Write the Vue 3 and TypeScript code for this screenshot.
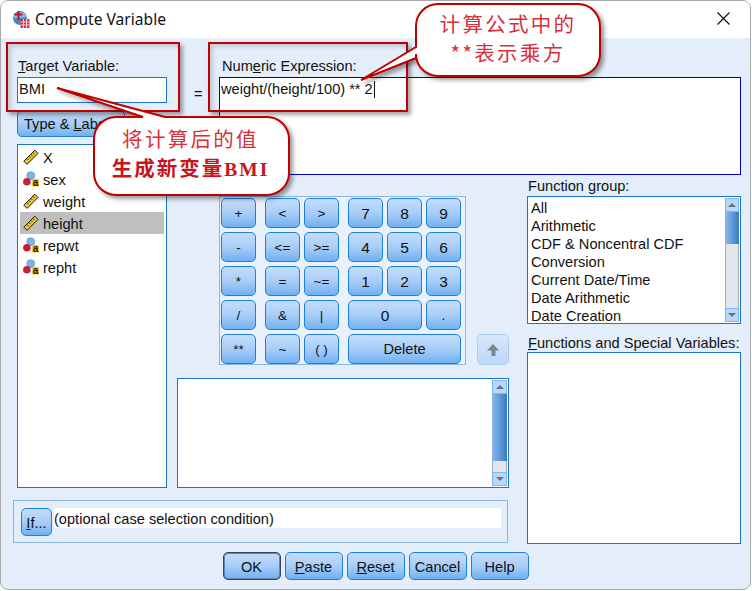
<script setup lang="ts">
interface Variable { name: string; kind: 'scale' | 'nominal'; selected?: boolean }
interface Key { label: string; col: string; row: number }

const variables: Variable[] = [
  { name: 'X', kind: 'scale' },
  { name: 'sex', kind: 'nominal' },
  { name: 'weight', kind: 'scale' },
  { name: 'height', kind: 'scale', selected: true },
  { name: 'repwt', kind: 'nominal' },
  { name: 'repht', kind: 'nominal' },
]

const keys: Key[] = [
  { label: '+', col: '1', row: 1 }, { label: '<', col: '3', row: 1 }, { label: '>', col: '5', row: 1 },
  { label: '7', col: '7', row: 1 }, { label: '8', col: '9', row: 1 }, { label: '9', col: '11', row: 1 },
  { label: '-', col: '1', row: 2 }, { label: '<=', col: '3', row: 2 }, { label: '>=', col: '5', row: 2 },
  { label: '4', col: '7', row: 2 }, { label: '5', col: '9', row: 2 }, { label: '6', col: '11', row: 2 },
  { label: '*', col: '1', row: 3 }, { label: '=', col: '3', row: 3 }, { label: '~=', col: '5', row: 3 },
  { label: '1', col: '7', row: 3 }, { label: '2', col: '9', row: 3 }, { label: '3', col: '11', row: 3 },
  { label: '/', col: '1', row: 4 }, { label: '&', col: '3', row: 4 }, { label: '|', col: '5', row: 4 },
  { label: '0', col: '7 / span 3', row: 4 }, { label: '.', col: '11', row: 4 },
  { label: '**', col: '1', row: 5 }, { label: '~', col: '3', row: 5 }, { label: '( )', col: '5', row: 5 },
  { label: 'Delete', col: '7 / span 5', row: 5 },
]

const groups: string[] = ['All', 'Arithmetic', 'CDF & Noncentral CDF', 'Conversion', 'Current Date/Time', 'Date Arithmetic', 'Date Creation']
</script>

<template>
  <div class="dialog">
    <header class="title">
      <svg class="title-icon" width="18" height="18" viewBox="0 0 18 18">
        <circle cx="8" cy="8" r="7" fill="#4f87b8" />
        <path d="M1.5 8A7 7 0 0 1 15 7L8 8Z" fill="#8fb8dc" />
        <path d="M6.5 1v9M2.5 4.5h8" stroke="#c8102e" stroke-width="2" />
        <rect x="8.5" y="9" width="9" height="9" fill="#c8354a" />
        <path d="M11.5 9v9M14.5 9v9M8.5 12h9M8.5 15h9" stroke="#f3d0d5" stroke-width="1" />
      </svg>
      <span class="title-text">Compute Variable</span>
      <svg class="close" width="13" height="13" viewBox="0 0 13 13">
        <path d="M.5.5l12 12M12.5.5l-12 12" stroke="#111" stroke-width="1.2" />
      </svg>
    </header>

    <main class="body">
      <section class="left">
        <label class="label target-label"><u>T</u>arget Variable:</label>
        <div class="target-input">BMI</div>
        <button class="btn type-btn">Type &amp; <u>L</u>abel...</button>
        <ul class="var-list">
          <li v-for="v in variables" :key="v.name" class="var" :class="{ selected: v.selected }">
            <svg v-if="v.kind === 'scale'" class="var-icon" width="16" height="16" viewBox="0 0 16 16">
              <path d="M.8 12.2 11.8 1.2l3.2 3.2L4 15.400Z" fill="#f4c531" stroke="#1a1a1a" stroke-width="1" />
              <path d="M4 9.500l1.600 1.600M6 7.500l1.600 1.600M8 5.500l1.600 1.600M10 3.500l1.600 1.600" stroke="#1a1a1a" stroke-width="1" />
            </svg>
            <svg v-else class="var-icon" width="16" height="16" viewBox="0 0 16 16">
              <circle cx="7.700" cy="4.700" r="4" fill="#7fb0e6" stroke="#5b8cc4" stroke-width=".6" />
              <circle cx="3.900" cy="10.700" r="3.800" fill="#c8202f" />
              <rect x="9" y="8" width="7" height="7.500" fill="#f5cb2a" />
              <text x="12.500" y="15" class="a-glyph">a</text>
            </svg>
            <span class="var-name">{{ v.name }}</span>
          </li>
        </ul>
      </section>

      <section class="expr-row">
        <div class="eq">=</div>
        <div class="expr-col">
          <label class="label expr-label">Num<u>e</u>ric Expression:</label>
          <div class="expr-box">weight/(height/100) ** 2<span class="caret"></span></div>
        </div>
      </section>

      <section class="middle">
        <div class="pad-row">
          <div class="keypad">
            <button
              v-for="k in keys"
              :key="k.label"
              class="btn key"
              :class="{ big: /^[0-9]$/.test(k.label), wide: k.label === 'Delete' }"
              :style="{ gridColumn: k.col, gridRow: k.row }"
            >{{ k.label }}</button>
          </div>
          <button class="arrow-btn" aria-label="Move up">
            <svg width="14" height="14" viewBox="0 0 14 14"><path d="M7 1 13 7.500H9.500V13H5.500V7.500H1Z" fill="#7d8690" /></svg>
          </button>
        </div>
        <div class="text-area">
          <div class="scroll scroll-wide">
            <span class="arrow up"></span>
            <span class="thumb"></span>
            <span class="track"></span>
            <span class="arrow down"></span>
          </div>
        </div>
      </section>

      <section class="right">
        <label class="label group-label">Function <u>g</u>roup:</label>
        <div class="group-box">
          <ul class="groups">
            <li v-for="g in groups" :key="g">{{ g }}</li>
          </ul>
          <div class="scroll scroll-narrow">
            <span class="arrow up"></span>
            <span class="thumb"></span>
            <span class="track"></span>
            <span class="arrow down"></span>
          </div>
        </div>
        <label class="label fn-label"><u>F</u>unctions and Special Variables:</label>
        <div class="fn-box"></div>
      </section>

      <section class="if-panel">
        <button class="btn if-btn"><u>I</u>f...</button>
        <div class="if-field">(optional case selection condition)</div>
      </section>
    </main>

    <footer class="footer">
      <button class="btn act default">OK</button>
      <button class="btn act"><u>P</u>aste</button>
      <button class="btn act"><u>R</u>eset</button>
      <button class="btn act">Cancel</button>
      <button class="btn act">Help</button>
    </footer>

    <div class="mark mark-a"></div>
    <div class="mark mark-b"></div>

    <svg class="bubbles" width="752" height="591" viewBox="0 0 752 591">
      <defs>
        <filter id="sh" x="-10%" y="-10%" width="125%" height="130%">
          <feDropShadow dx="3" dy="3" stdDeviation="2" flood-color="#000" flood-opacity=".4" />
        </filter>
      </defs>
      <path
        class="bubble"
        d="M116 117H143L57 88 165 117H267A22 22 0 0 1 289 139V173A22 22 0 0 1 267 195H116A22 22 0 0 1 94 173V139A22 22 0 0 1 116 117Z"
        filter="url(#sh)"
      />
      <path
        class="bubble"
        d="M438 4H578A22 22 0 0 1 600 26V54A22 22 0 0 1 578 76H438A22 22 0 0 1 416 54V58L361 80 416 47V26A22 22 0 0 1 438 4Z"
        filter="url(#sh)"
      />
    </svg>

    <div class="note note-a">
      <div>将计算后的值</div>
      <div class="strong">生成新变量<span class="latin">BMI</span></div>
    </div>
    <div class="note note-b">
      <div>计算公式中的</div>
      <div>**表示乘方</div>
    </div>
  </div>
</template>

<style>
html, body { margin: 0; background: #fff; }
</style>

<style scoped>
* { box-sizing: border-box; }
.dialog {
  position: relative;
  width: 751px;
  height: 590px;
  overflow: hidden;
  border: 1px solid #a8a8a8;
  border-radius: 8px;
  background: #e3eefa;
  font-family: "Liberation Sans", Arial, sans-serif;
  font-size: 14.600px;
  color: #111;
}
.title {
  display: flex;
  align-items: center;
  height: 37px;
  padding: 0 20px 2px 11px;
  background: #fff;
}
.title-icon { margin-right: 5px; }
.title-text { font-family: "Noto Sans", sans-serif; font-size: 15.600px; }
.close { margin-left: auto; }

.btn {
  margin: 0;
  padding: 1px 0 0;
  font: inherit;
  color: #111;
  border: 1px solid #1e80d8;
  border-radius: 5px;
  background: linear-gradient(#c3ddfb, #a9cdf7 50%, #6fb1f2);
}

.body {
  display: grid;
  grid-template-columns: 150px 10px 332px 18px 214px;
  grid-template-rows: 136px 314px 56px;
  padding-left: 16px;
}
.left { grid-column: 1; grid-row: 1 / 3; display: flex; flex-direction: column; }
.label { display: block; line-height: 16px; white-space: nowrap; }
.target-label { margin-top: 20px; padding-left: 1px; }
.target-input {
  height: 26px;
  margin-top: 3px;
  padding: 1px 1px 0;
  line-height: 21px;
  background: #fff;
  border: 1px solid #1c75c8;
}
.type-btn { width: 108px; height: 27px; margin-top: 7px; flex: none; text-align: left; padding-left: 6px; white-space: nowrap; overflow: hidden; }
.var-list {
  flex: 1;
  margin: 7px 0 0;
  padding: 1px 2px 0;
  list-style: none;
  background: #fff;
  border: 1px solid #1c75c8;
}
.var { display: flex; align-items: center; height: 22px; padding-left: 3px; }
.var.selected { background: #bfbfbf; }
.var-icon { margin-right: 4px; flex: none; }
.var-name { padding-top: 1px; }
.a-glyph { font: bold 10px "Liberation Sans", sans-serif; text-anchor: middle; fill: #111; }

.expr-row { grid-column: 3 / -1; grid-row: 1; display: flex; }
.eq { width: 42px; padding: 48px 0 0 17px; line-height: 16px; }
.expr-col { flex: 1; min-width: 0; }
.expr-label { margin-top: 20px; padding-left: 3px; }
.expr-box {
  height: 98px;
  margin-top: 3px;
  padding: 1px 1px 0;
  line-height: 21px;
  background: #fff;
  border: 1px solid #0000c0;
}
.caret { display: inline-block; width: 1px; height: 17px; margin-left: 1px; vertical-align: -4px; background: #111; }

.middle { grid-column: 3; grid-row: 2; padding-top: 22px; }
.pad-row { display: flex; align-items: flex-end; padding-left: 42px; }
.keypad {
  display: grid;
  grid-template-columns: 35px 9px 35px 4px 35px 9px 35px 4px 35px 4px 35px;
  grid-template-rows: repeat(5, 30px);
  row-gap: 4px;
  width: 247px;
  height: 169px;
  padding: 1px;
  background: #e8f1fc;
  border: 1px solid #8db6de;
}
.key { font-size: 13.500px; line-height: 1; }
.key.big { font-size: 15.500px; }
.key.wide { font-size: 14.600px; }
.arrow-btn {
  display: flex;
  align-items: center;
  justify-content: center;
  width: 32px;
  height: 31px;
  margin-left: 11px;
  padding: 0;
  border: 1px solid #a9cdef;
  border-radius: 5px;
  background: linear-gradient(#d8e8fb, #bcd8f8);
}
.text-area {
  position: relative;
  height: 110px;
  margin-top: 13px;
  background: #fff;
  border: 1px solid #1c75c8;
}
.scroll {
  position: absolute;
  display: flex;
  flex-direction: column;
  background: #a9cff7;
}
.scroll-wide { top: 1px; right: 1px; bottom: 1px; width: 15px; }
.arrow { position: relative; flex: none; height: 14px; background: #b9d7f8; border: 1px solid #7fb6ee; }
.arrow::after {
  content: "";
  position: absolute;
  left: 50%;
  top: 50%;
  margin: -2px 0 0 -4px;
  border-left: 4px solid transparent;
  border-right: 4px solid transparent;
}
.arrow.up::after { border-bottom: 4px solid #6a7480; }
.arrow.down::after { border-top: 4px solid #6a7480; }
.thumb { background: linear-gradient(90deg, #8db8e6, #5e9ddd 50%, #3c78b8); }
.track { background: #e2e4ee; border: 1px solid #a8abb5; border-width: 0 1px; }
.scroll-wide .thumb { height: 67px; }
.scroll-wide .track { flex: 1; }
.scroll-narrow { top: 1px; right: 1px; bottom: 1px; width: 14px; }
.scroll-narrow .thumb { height: 32px; }
.scroll-narrow .track { flex: 1; }

.right { grid-column: 5; grid-row: 2 / 4; padding-top: 4px; display: flex; flex-direction: column; }
.group-label { padding-left: 1px; }
.group-box {
  position: relative;
  height: 128px;
  margin-top: 2px;
  background: #fff;
  border: 1px solid #1c75c8;
}
.groups { margin: 0; padding: 2px 0 0 3px; list-style: none; line-height: 18px; white-space: nowrap; }
.fn-label { margin-top: 11px; padding-left: 1px; }
.fn-box { height: 192px; margin-top: 1px; background: #fff; border: 1px solid #1c75c8; }

.if-panel {
  grid-column: 1 / 4;
  grid-row: 3;
  display: flex;
  gap: 2px;
  height: 43px;
  margin: 12px 1px 0 -4px;
  padding: 7px 6px 0 7px;
  border: 1px solid #8db6de;
}
.if-btn { width: 31px; height: 28px; flex: none; }
.if-field { flex: 1; height: 20px; line-height: 22px; background: #fff; }

.footer { display: flex; justify-content: center; gap: 4px; margin-top: 8px; }
.act { width: 58px; height: 28px; }
.default { border: 1px solid #33475b; box-shadow: inset 0 0 0 1px #5f88b5; }

.mark {
  position: absolute;
  top: 41px;
  height: 70px;
  border: 2px solid #c00000;
  box-shadow: 3px 3px 4px rgba(0, 0, 0, .35), inset 3px 3px 4px rgba(0, 0, 0, .15);
}
.mark-a { left: 5px; width: 174px; }
.mark-b { left: 207px; width: 200px; }

.bubbles { position: absolute; left: -1px; top: -1px; pointer-events: none; }
.bubble { fill: #fff; stroke: #c00000; stroke-width: 2; }

.note {
  position: absolute;
  font-family: "Noto Sans CJK SC", sans-serif;
  color: #d8303a;
  text-align: center;
  white-space: nowrap;
  font-size: 20.500px;
  line-height: 29px;
}
.note-a { left: 92px; top: 123px; width: 195px; letter-spacing: 2.300px; }
.note-a .strong { font-weight: 700; font-size: 20.500px; color: #c8141e; letter-spacing: 2px; }
.latin { font-family: "Liberation Serif", serif; font-size: 19.500px; letter-spacing: 2px; }
.note-b { left: 415px; top: 8px; width: 184px; letter-spacing: 2.300px; }
</style>
